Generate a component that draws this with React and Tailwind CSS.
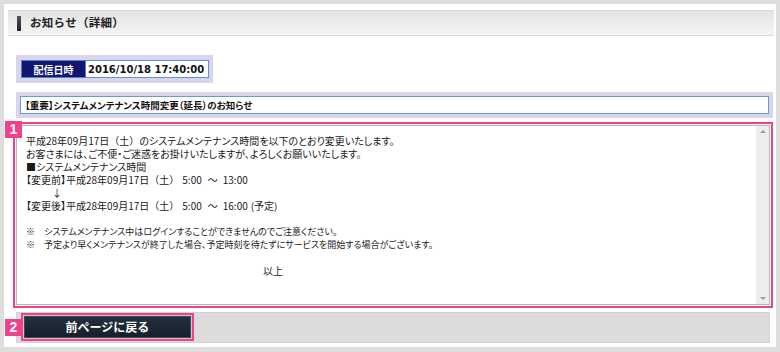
import React from "react";

const jp = { fontFamily: '"Noto Sans CJK JP", "Noto Sans", sans-serif' };

// full-width brackets kept at normal width (palt would halve them)
const Sat = () => <span className="[font-feature-settings:normal]">（土）</span>;

function Badge({ n, className }) {
  return (
    <div
      className={`absolute w-[17px] h-[17px] bg-[#f0418a] text-white text-[14px] font-bold leading-[17px] text-center ${className}`}
      style={{ fontFamily: '"Liberation Sans", Arial, sans-serif' }}
    >
      {n}
    </div>
  );
}

function ChangeLine({ label, end, note }) {
  return (
    <div className="h-[13px] flex whitespace-pre">
      <span>【{label}】</span>
      <span>平成28年09月17日</span>
      <Sat />
      <span className="ml-[3px]">5:00</span>
      <span className="ml-[6px]">～</span>
      <span className="ml-[5px]">{end}</span>
      {note && <span className="ml-[3px]">{note}</span>}
    </div>
  );
}

export default function App() {
  return (
    <div className="w-[780px] h-[352px] bg-[#dedede] pt-[4px] pl-[4px] overflow-hidden" style={jp}>
      <div className="w-[772px] h-[343px] bg-white flex flex-col">
        {/* Header */}
        <div className="ml-[4px] mt-[6px] w-[766px] h-[26px] flex items-center border-t border-b border-[#d9d9d9] bg-gradient-to-b from-[#e3e3e3] via-[#ececec] to-[#f5f5f5]">
          <div className="ml-[9px] w-[4px] h-[15px] bg-gradient-to-b from-[#555] to-[#222]" />
          <span className="ml-[9px] text-[11.5px] font-bold text-[#222] leading-none tracking-[0.3px]">お知らせ（詳細）</span>
        </div>

        {/* Date */}
        <div className="ml-[12px] mt-[19px] w-[197px] h-[28px] bg-[#d9d5ea] pl-[5px] pt-[5px]">
          <div className="flex h-[18px]">
            <div className="w-[65px] h-full bg-[#12166e] border border-[#4f82d2] text-white text-[10px] font-bold flex items-center justify-center">
              配信日時
            </div>
            <div
              className="w-[123px] h-full bg-white border border-[#5f92d4] border-l-0 text-[10px] font-bold text-[#111] flex items-center pl-[2px]"
              style={{ fontFamily: '"DejaVu Sans", sans-serif' }}
            >
              2016/10/18 17:40:00
            </div>
          </div>
        </div>

        {/* Subject */}
        <div className="ml-[12px] mt-[9px] w-[757px] h-[26px] bg-[#d9d5ea] px-[4px] pt-[4px]">
          <div className="h-[18px] bg-white border border-[#6a9ad6] flex items-center pl-[4px] text-[9.5px] font-bold text-[#111] [font-feature-settings:'palt']">
            【重要】システムメンテナンス時間変更（延長）のお知らせ
          </div>
        </div>

        {/* Body */}
        <div className="relative ml-[9px] mt-[4px] w-[760px] h-[186px] border-2 border-[#f0418a] p-[1px]">
          <Badge n="1" className="-left-[10px] -top-[3px]" />
          <div className="h-full border border-[#b8b8b8] flex">
            <div className="flex-1 pl-[9px] pt-[8px] text-[10px] leading-[13px] text-[#1a1a1a] [font-feature-settings:'palt']">
              <div className="h-[13px]">
                平成28年09月17日<Sat />のシステムメンテナンス時間を以下のとおり変更いたします。
              </div>
              <div className="h-[13px]">お客さまには、ご不便・ご迷惑をお掛けいたしますが、よろしくお願いいたします。</div>
              <div className="h-[13px]">■システムメンテナンス時間</div>
              <ChangeLine label="変更前" end="13:00" />
              <div className="h-[13px] pl-[26px]">↓</div>
              <ChangeLine label="変更後" end="16:00" note="(予定)" />
              <div className="h-[13px]" />
              <div className="h-[13px] text-[9px] whitespace-pre">※　システムメンテナンス中はログインすることができませんのでご注意ください。</div>
              <div className="h-[13px] text-[9px] whitespace-pre">※　予定より早くメンテナンスが終了した場合、予定時刻を待たずにサービスを開始する場合がございます。</div>
              <div className="h-[13px]" />
              <div className="h-[13px] pl-[237px]">以上</div>
            </div>
            <div className="w-[13px] bg-[#eeeeee] flex flex-col items-center justify-between py-[4px]">
              <div className="w-0 h-0 border-l-[3px] border-r-[3px] border-b-[3px] border-l-transparent border-r-transparent border-b-[#9a9a9a]" />
              <div className="w-0 h-0 border-l-[3px] border-r-[3px] border-t-[3px] border-l-transparent border-r-transparent border-t-[#9a9a9a]" />
            </div>
          </div>
        </div>

        {/* Footer */}
        <div className="relative ml-[12px] mt-[4px] w-[754px] h-[31px] bg-[#dcdcdc] border border-[#d2d2d2]">
          <Badge n="2" className="-left-[12px] top-[6px]" />
          <div className="ml-[4px] w-[173px] h-[28px] border-2 border-[#f0418a] p-[1px] bg-[#c9c9c9]">
            <button className="w-full h-full bg-gradient-to-b from-[#24303e] to-[#16202b] border border-[#3c4a5a] text-white text-[12px] font-bold flex items-center justify-center">
              前ページに戻る
            </button>
          </div>
        </div>
      </div>
    </div>
  );
}
